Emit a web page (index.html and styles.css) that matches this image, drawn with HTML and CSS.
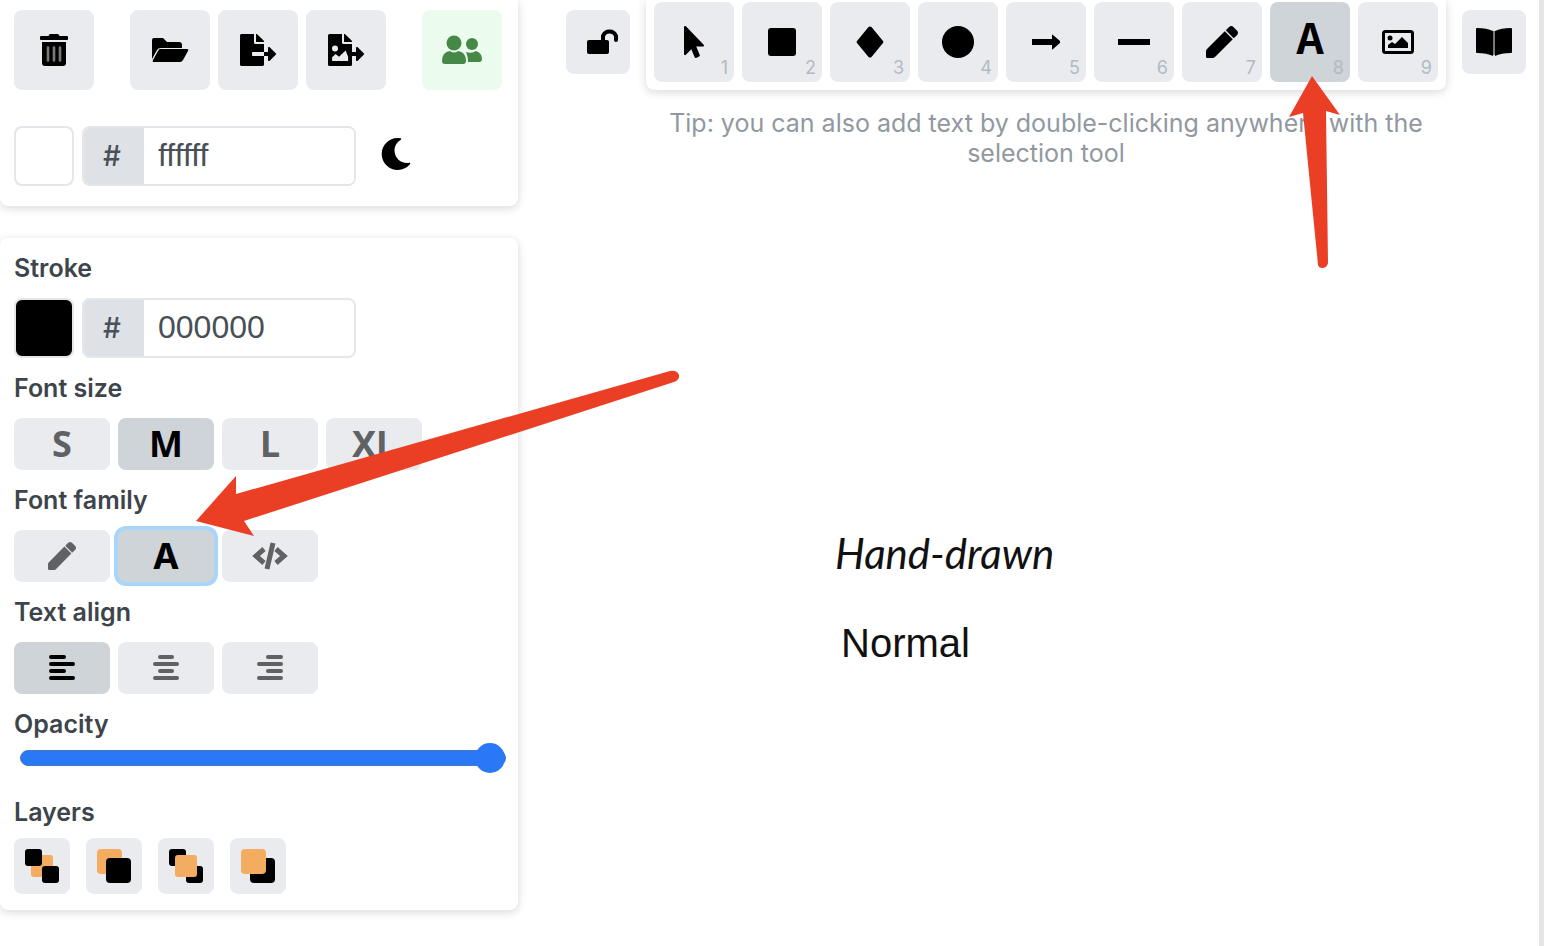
FILE: index.html
```html
<!DOCTYPE html>
<html lang="en">
<head>
<meta charset="utf-8">
<title>Whiteboard</title>
<link rel="stylesheet" href="styles.css">
</head>
<body>
<div class="app">
  <aside class="sidebar">
    <section class="panel panel-file">
      <div class="file-row">
        <button class="tool" type="button" aria-label="Clear canvas"><svg width="28" height="32" viewBox="0 0 448 512"><path d="M32 464a48 48 0 0 0 48 48h288a48 48 0 0 0 48-48V128H32z"/><path class="trash-slots" d="M128 216v208M224 216v208M320 216v208"/><path d="M432 32H312l-9.400-18.700A24 24 0 0 0 281.100 0H166.800a23.720 23.720 0 0 0-21.400 13.300L136 32H16A16 16 0 0 0 0 48v32a16 16 0 0 0 16 16h416a16 16 0 0 0 16-16V48a16 16 0 0 0-16-16z"/></svg></button>
        <div class="file-group">
          <button class="tool" type="button" aria-label="Open"><svg width="38" height="26" viewBox="0 0 38 26"><path d="M1 3Q1 1 3 1H12L16 5H28Q31 5 31 8V11H10Q7 11 6 13L1 22Z"/><path d="M9 12H36Q38 12 37 14L32 23Q31 25 29 25H3Q1 25 2 23L7 14Q8 12 9 12Z"/></svg></button>
          <button class="tool" type="button" aria-label="Export"><svg width="36" height="32" viewBox="0 0 576 512"><path d="M384 121.900c0-6.300-2.500-12.400-7-16.900L279.100 7c-4.500-4.500-10.600-7-17-7H256v128h128zM571 308l-95.700-96.400c-10.100-10.100-27.400-3-27.400 11.300V288h-64v64h64v65.200c0 14.300 17.300 21.400 27.400 11.300L571 332c6.600-6.600 6.600-17.400 0-24zm-379 28v-32c0-8.800 7.200-16 16-16h176V160H248c-13.200 0-24-10.800-24-24V0H24C10.700 0 0 10.700 0 24v464c0 13.300 10.700 24 24 24h336c13.300 0 24-10.700 24-24V352H208c-8.800 0-16-7.200-16-16z"/></svg></button>
          <button class="tool" type="button" aria-label="Save as image"><svg width="36" height="32" viewBox="0 0 576 512"><path d="M384 121.900c0-6.300-2.500-12.400-7-16.900L279.100 7c-4.500-4.500-10.600-7-17-7H256v128h128zM571 308l-95.700-96.400c-10.100-10.100-27.400-3-27.400 11.300V288h-64v64h64v65.200c0 14.300 17.300 21.400 27.400 11.300L571 332c6.600-6.600 6.600-17.400 0-24z"/><path fill-rule="evenodd" d="M24 0H224V136q0 24 24 24H384V488q0 24-24 24H24q-24 0-24-24V24Q0 0 24 0ZM112 182a48 48 0 1 0 0 96a48 48 0 1 0 0-96ZM66 432H322V362L282 262L176 364L122 320L66 372Z"/><path d="M330 288h60v64h-60z"/></svg></button>
        </div>
        <button class="tool tool-collab" type="button" aria-label="Live collaboration"><svg width="40" height="30" viewBox="0 0 40 30"><circle cx="12" cy="8" r="7.500"/><circle cx="30" cy="9" r="6"/><path d="M0 26Q0 17 8 16Q12 19 16 16Q24 17 24 26Q24 29 21 29H3Q0 29 0 26Z"/><path d="M24 17Q30 19 34 16Q40 18 40 24Q40 27 37 27H26Q26 21 24 17Z"/></svg></button>
      </div>
      <div class="color-row">
        <button class="swatch swatch-white" type="button" aria-label="Canvas background"></button>
        <div class="hex"><label class="hash" for="bg-hex">#</label><input class="hex-input" id="bg-hex" value="ffffff"></div>
        <button class="theme" type="button" aria-label="Dark mode"><svg width="32" height="32" viewBox="0 0 512 512"><path d="M283.200 512c79 0 151.100-35.900 198.900-94.800 7-8.700-.6-21.400-11.600-19.400-124.200 23.700-238.300-71.500-238.300-196.900 0-72.200 38.700-138.600 101.500-174.400 9.700-5.500 7.300-20.200-3.700-22.200A258 258 0 0 0 283.200 0c-141.300 0-256 114.500-256 256 0 141.300 114.500 256 256 256z"/></svg></button>
      </div>
    </section>

    <section class="panel panel-props">
      <div class="group">
        <label class="title" for="stroke-hex">Stroke</label>
        <div class="color-row">
          <button class="swatch swatch-black" type="button" aria-label="Stroke colour"></button>
          <div class="hex"><span class="hash">#</span><input class="hex-input" id="stroke-hex" value="000000"></div>
        </div>
      </div>
      <div class="group">
        <h2 class="title">Font size</h2>
        <div class="choices">
          <button class="choice" type="button">S</button>
          <button class="choice selected" type="button">M</button>
          <button class="choice" type="button">L</button>
          <button class="choice" type="button">XL</button>
        </div>
      </div>
      <div class="group">
        <h2 class="title">Font family</h2>
        <div class="choices">
          <button class="choice" type="button" aria-label="Hand-drawn"><svg width="28" height="28" viewBox="0 0 512 512"><use href="#pencil"/></svg></button>
          <button class="choice choice-normal selected focused" type="button">A</button>
          <button class="choice" type="button" aria-label="Code"><svg width="36" height="28" viewBox="0 0 36 28"><path class="code-lines" d="M12 7L4 14L12 21M24 7L32 14L24 21M21 1L15 27"/></svg></button>
        </div>
      </div>
      <div class="group">
        <h2 class="title">Text align</h2>
        <div class="choices">
          <button class="choice selected" type="button" aria-label="Left"><svg width="26" height="26" viewBox="0 0 26 26"><path class="align-lines" d="M2 2H15M2 9H24M2 16H15M2 23H24"/></svg></button>
          <button class="choice" type="button" aria-label="Center"><svg width="26" height="26" viewBox="0 0 26 26"><path class="align-lines" d="M7 2H19M2 9H24M7 16H19M2 23H24"/></svg></button>
          <button class="choice" type="button" aria-label="Right"><svg width="26" height="26" viewBox="0 0 26 26"><path class="align-lines" d="M11 2H24M2 9H24M11 16H24M2 23H24"/></svg></button>
        </div>
      </div>
      <div class="group group-range">
        <label class="title" for="opacity">Opacity</label>
        <input class="range" id="opacity" type="range" min="0" max="100" value="100">
      </div>
      <div class="group group-layers">
        <h2 class="title">Layers</h2>
        <div class="layers">
          <button class="layer" type="button" aria-label="Send to back"><svg width="36" height="36" viewBox="0 0 36 36"><rect class="accent" x="7" y="7" width="22" height="22" rx="3"/><rect x="1" y="1" width="17" height="17" rx="3"/><rect x="18" y="18" width="17" height="17" rx="3"/></svg></button>
          <button class="layer" type="button" aria-label="Send backward"><svg width="36" height="36" viewBox="0 0 36 36"><rect class="accent" x="1" y="1" width="25" height="25" rx="4"/><rect x="10" y="10" width="25" height="25" rx="4"/></svg></button>
          <button class="layer" type="button" aria-label="Bring to front"><svg width="36" height="36" viewBox="0 0 36 36"><rect x="1" y="1" width="17" height="17" rx="3"/><rect x="18" y="18" width="17" height="17" rx="3"/><rect class="accent" x="7" y="7" width="22" height="22" rx="3"/></svg></button>
          <button class="layer" type="button" aria-label="Bring forward"><svg width="36" height="36" viewBox="0 0 36 36"><rect x="10" y="10" width="25" height="25" rx="4"/><rect class="accent" x="1" y="1" width="25" height="25" rx="4"/></svg></button>
        </div>
      </div>
    </section>
  </aside>

  <main class="board">
    <header class="topbar">
      <button class="tool tool-small" type="button" aria-label="Keep tool active"><svg width="40" height="28" viewBox="0 0 40 28"><rect x="9" y="12" width="22" height="14" rx="2"/><path class="shackle" d="M25 13V8A7 7 0 0 1 38 8V12"/></svg></button>
      <nav class="toolbar">
        <button class="tool" type="button" aria-label="Selection"><svg width="20" height="32" viewBox="0 0 320 512"><path d="M302.200 329.100H196.100l55.800 136c3.900 9.400-.5 20-9.400 24l-49.200 21.400c-9.100 4-19.400-.5-23.300-9.700l-53-129.100-86.700 89.100C18.700 472.700 0 463.600 0 448V18.300C0 1.900 19.900-6.100 30.300 5.400l284.400 292.600c11.500 11.200 3 31.100-12.500 31.100z"/></svg><span class="key">1</span></button>
        <button class="tool" type="button" aria-label="Rectangle"><svg width="28" height="28" viewBox="0 0 28 28"><rect width="28" height="28" rx="3"/></svg><span class="key">2</span></button>
        <button class="tool" type="button" aria-label="Diamond"><svg width="28" height="32" viewBox="0 0 28 32"><path d="M12.500 1Q14 0 15.500 1L27 15Q28 16 27 17L15.500 31Q14 32 12.500 31L1 17Q0 16 1 15Z"/></svg><span class="key">3</span></button>
        <button class="tool" type="button" aria-label="Ellipse"><svg width="32" height="32" viewBox="0 0 32 32"><circle cx="16" cy="16" r="16"/></svg><span class="key">4</span></button>
        <button class="tool" type="button" aria-label="Arrow"><svg width="28" height="16" viewBox="0 0 28 16"><path d="M0 5H20V1Q20 0 21 1L28 7V9L21 15Q20 16 20 15V11H0Z"/></svg><span class="key">5</span></button>
        <button class="tool" type="button" aria-label="Line"><svg width="32" height="6" viewBox="0 0 32 6"><rect width="32" height="6"/></svg><span class="key">6</span></button>
        <button class="tool" type="button" aria-label="Draw"><svg width="32" height="32" viewBox="0 0 512 512"><path id="pencil" d="M497.900 142.100l-46.100 46.100c-4.700 4.700-12.300 4.700-17 0l-111-111c-4.700-4.700-4.700-12.300 0-17l46.100-46.100c18.700-18.700 49.100-18.700 67.900 0l60.100 60.100c18.800 18.700 18.800 49.100 0 67.900zM300 84L16 368Q0 384 0 404V492Q0 512 20 512H108Q128 512 144 496L428 212Z"/></svg><span class="key">7</span></button>
        <button class="tool tool-text selected" type="button" aria-label="Text">A<span class="key">8</span></button>
        <button class="tool" type="button" aria-label="Insert image"><svg width="32" height="24" viewBox="0 0 32 24"><rect class="frame" x="1.500" y="1.500" width="29" height="21" rx="2"/><circle cx="8" cy="8" r="2.500"/><path d="M6 18V15L10 12L13 14L20 7L26 13V18Z"/></svg><span class="key">9</span></button>
      </nav>
      <button class="tool tool-small" type="button" aria-label="Library"><svg width="38" height="30" viewBox="0 0 38 30"><path d="M1 2Q1 1 2 1Q12 1 18 4V29Q12 26 2 26Q1 26 1 25ZM37 2Q37 1 36 1Q26 1 20 4V29Q26 26 36 26Q37 26 37 25Z"/><path class="spine" d="M19 4V28"/></svg></button>
    </header>
    <p class="tip">Tip: you can also add text by double-clicking anywhere with the selection tool</p>
    <div class="canvas-text hand">Hand-drawn</div>
    <div class="canvas-text normal">Normal</div>
  </main>

  <svg class="arrow arrow-text" width="60" height="200" viewBox="0 0 60 200" aria-hidden="true"><path d="M26 5L54 44L40 40L42 192Q41 197 36 197Q33 197 32 194L17 42L3 46Z"/></svg>
  <svg class="arrow arrow-family" width="500" height="180" viewBox="0 0 500 180" aria-hidden="true"><path d="M6 151L46 106V124L480 1Q487 0 489 5Q490 10 484 12L54 151L64 166Z"/></svg>
</div>
</body>
</html>
```
FILE: styles.css
```css
* { box-sizing: border-box; }
body { margin: 0; background: #fff; color: #3d444b; font-family: Inter, "Liberation Sans", sans-serif; }
button { margin: 0; padding: 0; border: 0; font: inherit; color: #000; cursor: pointer; }
svg { display: block; fill: currentColor; }

.app {
  position: relative;
  display: grid;
  grid-template-columns: 518px 1fr;
  min-height: 100vh;
  overflow: hidden;
  border-right: 5px solid #e6e6e6;
}

/* side panels */
.sidebar { display: flex; flex-direction: column; align-items: stretch; gap: 32px; }
.panel { background: #fff; border-radius: 8px; box-shadow: 0 2px 10px rgba(0, 0, 0, .16); padding: 16px 12px 16px 14px; }
.panel-file { display: flex; flex-direction: column; gap: 36px; padding: 10px 16px 20px 14px; border-radius: 0 0 8px 8px; }
.file-row { display: flex; justify-content: space-between; }
.file-group { display: flex; gap: 8px; }

.tool {
  position: relative;
  display: flex;
  align-items: center;
  justify-content: center;
  width: 80px;
  height: 80px;
  border-radius: 8px;
  background: #e9ebef;
}
.tool-collab { background: #ebfbee; color: #468847; }
.tool-small { width: 64px; height: 64px; }
.tool-text { font: bold 46px/80px "Liberation Mono", monospace; }
.tool.selected, .choice.selected { background: #ced4d8; color: #000; }
.key { position: absolute; right: 6px; bottom: 4px; font: 18px/20px Inter, sans-serif; color: #b3bac1; }
.trash-slots { stroke: #77787a; stroke-width: 42; stroke-linecap: round; }
.shackle { fill: none; stroke: currentColor; stroke-width: 4; stroke-linecap: round; }
.frame { fill: none; stroke: currentColor; stroke-width: 3; }
.spine { stroke: #777; stroke-width: 2; }

.color-row { display: flex; align-items: center; gap: 8px; }
.swatch { width: 60px; height: 60px; border: 2px solid #e4e6eb; border-radius: 8px; }
.swatch-white { background: #fff; }
.swatch-black { background: #000; }
.hex { display: flex; width: 274px; height: 60px; border: 2px solid #e4e6eb; border-radius: 8px; overflow: hidden; }
.hash { width: 60px; padding-right: 4px; background: #dee2e6; font-size: 28px; font-weight: 500; line-height: 56px; text-align: center; color: #495057; }
.hex-input { flex: 1; min-width: 0; border: 0; padding: 0 14px 2px; font: 32px "Liberation Sans", sans-serif; color: #495057; background: #fff; outline: 0; }
.theme { margin-left: 16px; padding-bottom: 4px; background: none; }

.panel-props { display: flex; flex-direction: column; gap: 16px; }
.group { display: flex; flex-direction: column; gap: 16px; }
.group-range { gap: 4px; }
.group-layers { gap: 12px; padding-top: 8px; }
.title { margin: 0; font-size: 25px; font-weight: 600; line-height: 28px; }
.choices { display: flex; gap: 8px; }
.choice {
  display: flex;
  align-items: center;
  justify-content: center;
  width: 96px;
  height: 52px;
  border-radius: 8px;
  background: #e9ebef;
  color: #5f6163;
  font: bold 36px/52px "Noto Sans", sans-serif;
}
.choice-normal { font-family: Inter, sans-serif; }
.focused { box-shadow: 0 0 0 4px #a9d5fb; }
.code-lines { fill: none; stroke: currentColor; stroke-width: 5; }
.align-lines { stroke: currentColor; stroke-width: 4; stroke-linecap: round; }

.range { -webkit-appearance: none; appearance: none; height: 32px; margin: 0 0 0 6px; background: none; }
.range::-webkit-slider-runnable-track { height: 16px; border-radius: 8px; background: #2978f6; border: 1px solid #4a78bd; }
.range::-webkit-slider-thumb { -webkit-appearance: none; width: 30px; height: 30px; margin-top: -8px; border-radius: 50%; background: #2978f6; }

.layers { display: flex; gap: 16px; }
.layer { display: flex; align-items: center; justify-content: center; width: 56px; height: 56px; border-radius: 8px; background: #e9ebef; }
.accent { fill: #f4ac60; }

/* drawing area */
.board { position: relative; display: flex; flex-direction: column; padding: 0 13px 0 48px; }
.topbar { display: flex; justify-content: center; gap: 16px; }
.topbar > .tool { margin-top: 10px; }
.toolbar { display: flex; gap: 8px; padding: 2px 8px 8px; border-radius: 0 0 8px 8px; background: #fff; box-shadow: 0 2px 10px rgba(0, 0, 0, .16); }
.tip { align-self: center; max-width: 800px; margin: 18px 0 0; font-size: 25px; line-height: 30px; text-align: center; color: #91989f; }
.canvas-text { position: absolute; color: #111; white-space: nowrap; }
.hand { left: 317px; top: 530px; font: italic 42px/46px Virgil, Lato, sans-serif; }
.normal { left: 323px; top: 620px; font: 40px/46px "Liberation Sans", sans-serif; }

.arrow { position: absolute; fill: #eb3f25; pointer-events: none; }
.arrow-text { left: 1286px; top: 71px; }
.arrow-family { left: 190px; top: 370px; }
```
